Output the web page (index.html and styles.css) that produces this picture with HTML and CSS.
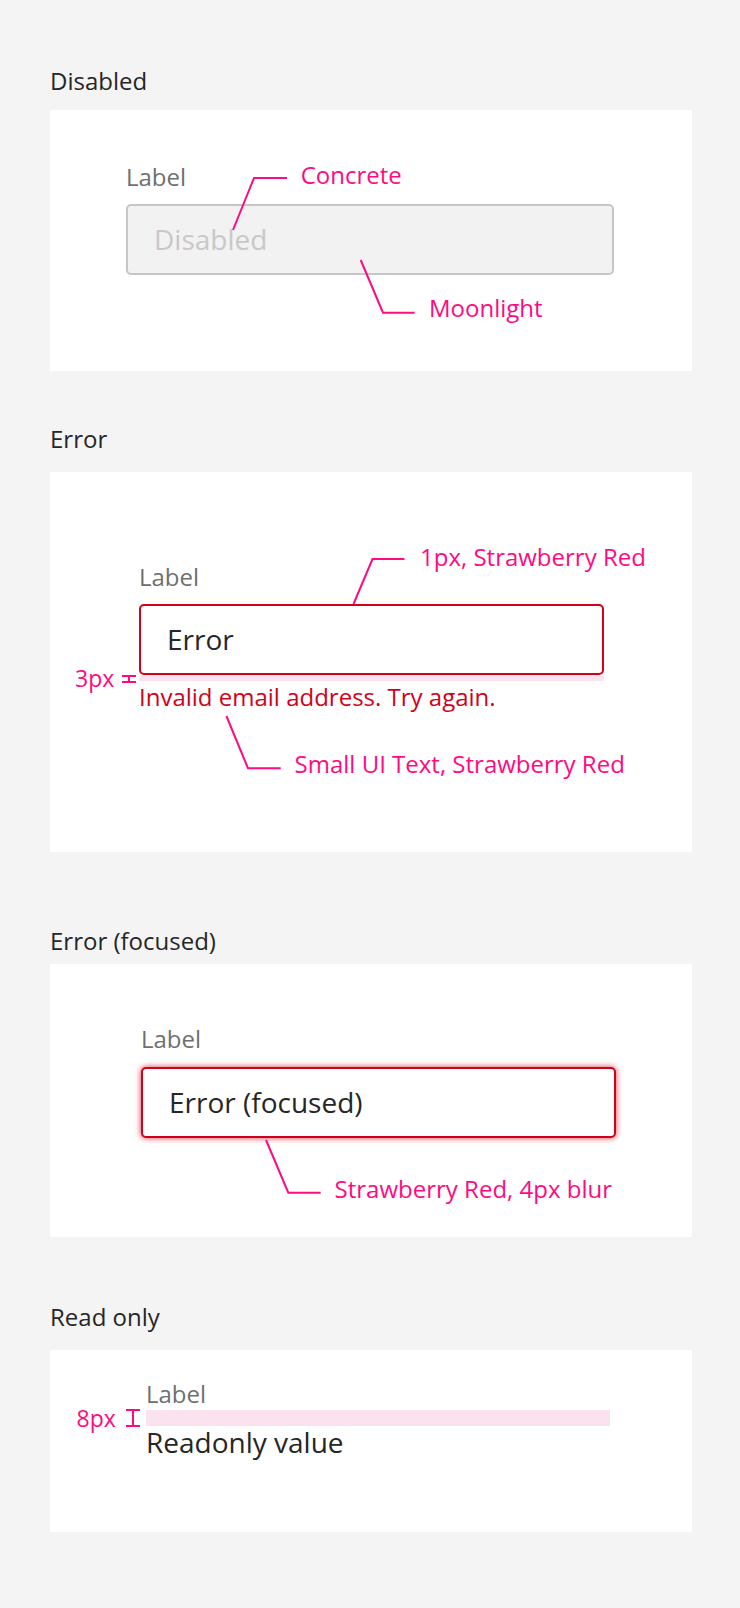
FILE: index.html
```html
<!DOCTYPE html>
<html lang="en">
<head>
<meta charset="utf-8">
<title>Text input states</title>
<link rel="stylesheet" href="styles.css">
</head>
<body>
<main class="page">
  <section class="state state-disabled">
    <h2 class="state-title">Disabled</h2>
    <div class="card card-disabled">
      <div class="field field-disabled">
        <div class="field-label">Label</div>
        <div class="input input-disabled">Disabled</div>
      </div>
      <svg class="leaders" width="642" height="261" viewBox="0 0 642 261">
        <polyline points="183,120 204,68 237,68"/>
        <polyline points="310.7,150 333,202.7 364.6,202.7"/>
      </svg>
      <span class="note note-concrete">Concrete</span>
      <span class="note note-moonlight">Moonlight</span>
    </div>
  </section>

  <section class="state state-error">
    <h2 class="state-title">Error</h2>
    <div class="card card-error">
      <div class="field field-error">
        <div class="field-label">Label</div>
        <div class="input input-error">Error</div>
        <div class="spacer spacer-3"></div>
        <div class="field-message">Invalid email address. Try again.</div>
      </div>
      <svg class="leaders" width="642" height="380" viewBox="0 0 642 380">
        <polyline points="303.5,132 322.5,87 354.5,87"/>
        <polyline points="176.4,244 198,296.3 230.7,296.3"/>
        <path d="M72 204H86M72 210H86M79 204V210"/>
      </svg>
      <span class="note note-border">1px, Strawberry Red</span>
      <span class="note note-message">Small UI Text, Strawberry Red</span>
      <span class="note note-size note-3px">3px</span>
    </div>
  </section>

  <section class="state state-focused">
    <h2 class="state-title">Error (focused)</h2>
    <div class="card card-focused">
      <div class="field field-focused">
        <div class="field-label">Label</div>
        <div class="input input-error input-focused">Error (focused)</div>
      </div>
      <svg class="leaders" width="642" height="273" viewBox="0 0 642 273">
        <polyline points="216,176 238.3,228.7 270.7,228.7"/>
      </svg>
      <span class="note note-blur">Strawberry Red, 4px blur</span>
    </div>
  </section>

  <section class="state state-readonly">
    <h2 class="state-title">Read only</h2>
    <div class="card card-readonly">
      <div class="field field-readonly">
        <div class="field-label">Label</div>
        <div class="spacer spacer-8"></div>
        <div class="readonly-value">Readonly value</div>
      </div>
      <svg class="leaders" width="642" height="182" viewBox="0 0 642 182">
        <path d="M76 60H90M76 76H90M83 60V76"/>
      </svg>
      <span class="note note-size note-8px">8px</span>
    </div>
  </section>
</main>
</body>
</html>
```

FILE: styles.css
```css
html, body {
  margin: 0;
  padding: 0;
}

body {
  background: #f4f4f4;
  font-family: "Open Sans", "Noto Sans", sans-serif;
  color: #262626;
}

.page {
  width: 642px;
  padding: 64.7px 0 76px 50px;
  display: flex;
  flex-direction: column;
}

.state-title {
  margin: 0;
  font-size: 24px;
  line-height: 32px;
  font-weight: 400;
  color: #262626;
}

.state-disabled .state-title { margin-bottom: 13.3px; }
.state-error { margin-top: 51.7px; }
.state-error .state-title { margin-bottom: 17.3px; }
.state-focused { margin-top: 72.7px; }
.state-focused .state-title { margin-bottom: 7.3px; }
.state-readonly { margin-top: 63.7px; }
.state-readonly .state-title { margin-bottom: 17.3px; }

.card {
  position: relative;
  background: #ffffff;
  box-sizing: border-box;
}

.card-disabled { padding: 51.7px 0 96px 76px; height: 261px; }
.card-error { padding: 89.7px 0 139.5px 89px; height: 380px; }
.card-focused { padding: 59.7px 0 100px 91px; height: 273px; }
.card-readonly { padding: 28.7px 0 75px 96px; height: 182px; }

.field {
  display: flex;
  flex-direction: column;
}

.field-disabled { width: 488px; }
.field-error { width: 465px; }
.field-focused { width: 475px; }
.field-readonly { width: 464px; }

.field-label {
  font-size: 24px;
  line-height: 30px;
  color: #6f6f6f;
}

.input {
  box-sizing: border-box;
  height: 71px;
  margin-top: 12.3px;
  padding-left: 26px;
  border: 2px solid #c8c8c8;
  border-radius: 5px;
  font-size: 28px;
  line-height: 67px;
  color: #262626;
  background: #ffffff;
}

.field-focused .input { margin-top: 13.3px; }

.input-disabled {
  background: #f2f2f2;
  border-color: #c6c6c6;
  color: #c8c8c8;
}

.input-error {
  border-color: #d0021b;
}

.input-focused {
  box-shadow: 0 0 6px rgba(208, 2, 27, 0.8);
}

.spacer {
  background: #fae3ef;
}

.spacer-3 { height: 6px; }
.spacer-8 { height: 16px; margin-top: 1.3px; }

.field-message {
  margin-top: 2.4px;
  font-size: 24px;
  line-height: 28px;
  color: #d0021b;
}

.readonly-value {
  margin-top: 1px;
  font-size: 28px;
  line-height: 30px;
  color: #262626;
}

.leaders {
  position: absolute;
  left: 0;
  top: 0;
  overflow: visible;
}

.leaders polyline,
.leaders path {
  fill: none;
  stroke: #ff0a82;
  stroke-width: 2;
}

.note {
  position: absolute;
  font-size: 24px;
  line-height: 30px;
  color: #ff0a82;
  white-space: nowrap;
}

.note-size {
  font-size: 23px;
}

.note-concrete { left: 250.7px; top: 50px; }
.note-moonlight { left: 379px; top: 183.2px; }
.note-border { left: 370px; top: 69.7px; }
.note-message { left: 244.6px; top: 277px; }
.note-3px { left: 25px; top: 190.8px; }
.note-blur { left: 284.6px; top: 210px; }
.note-8px { left: 26.6px; top: 52.8px; }
```
